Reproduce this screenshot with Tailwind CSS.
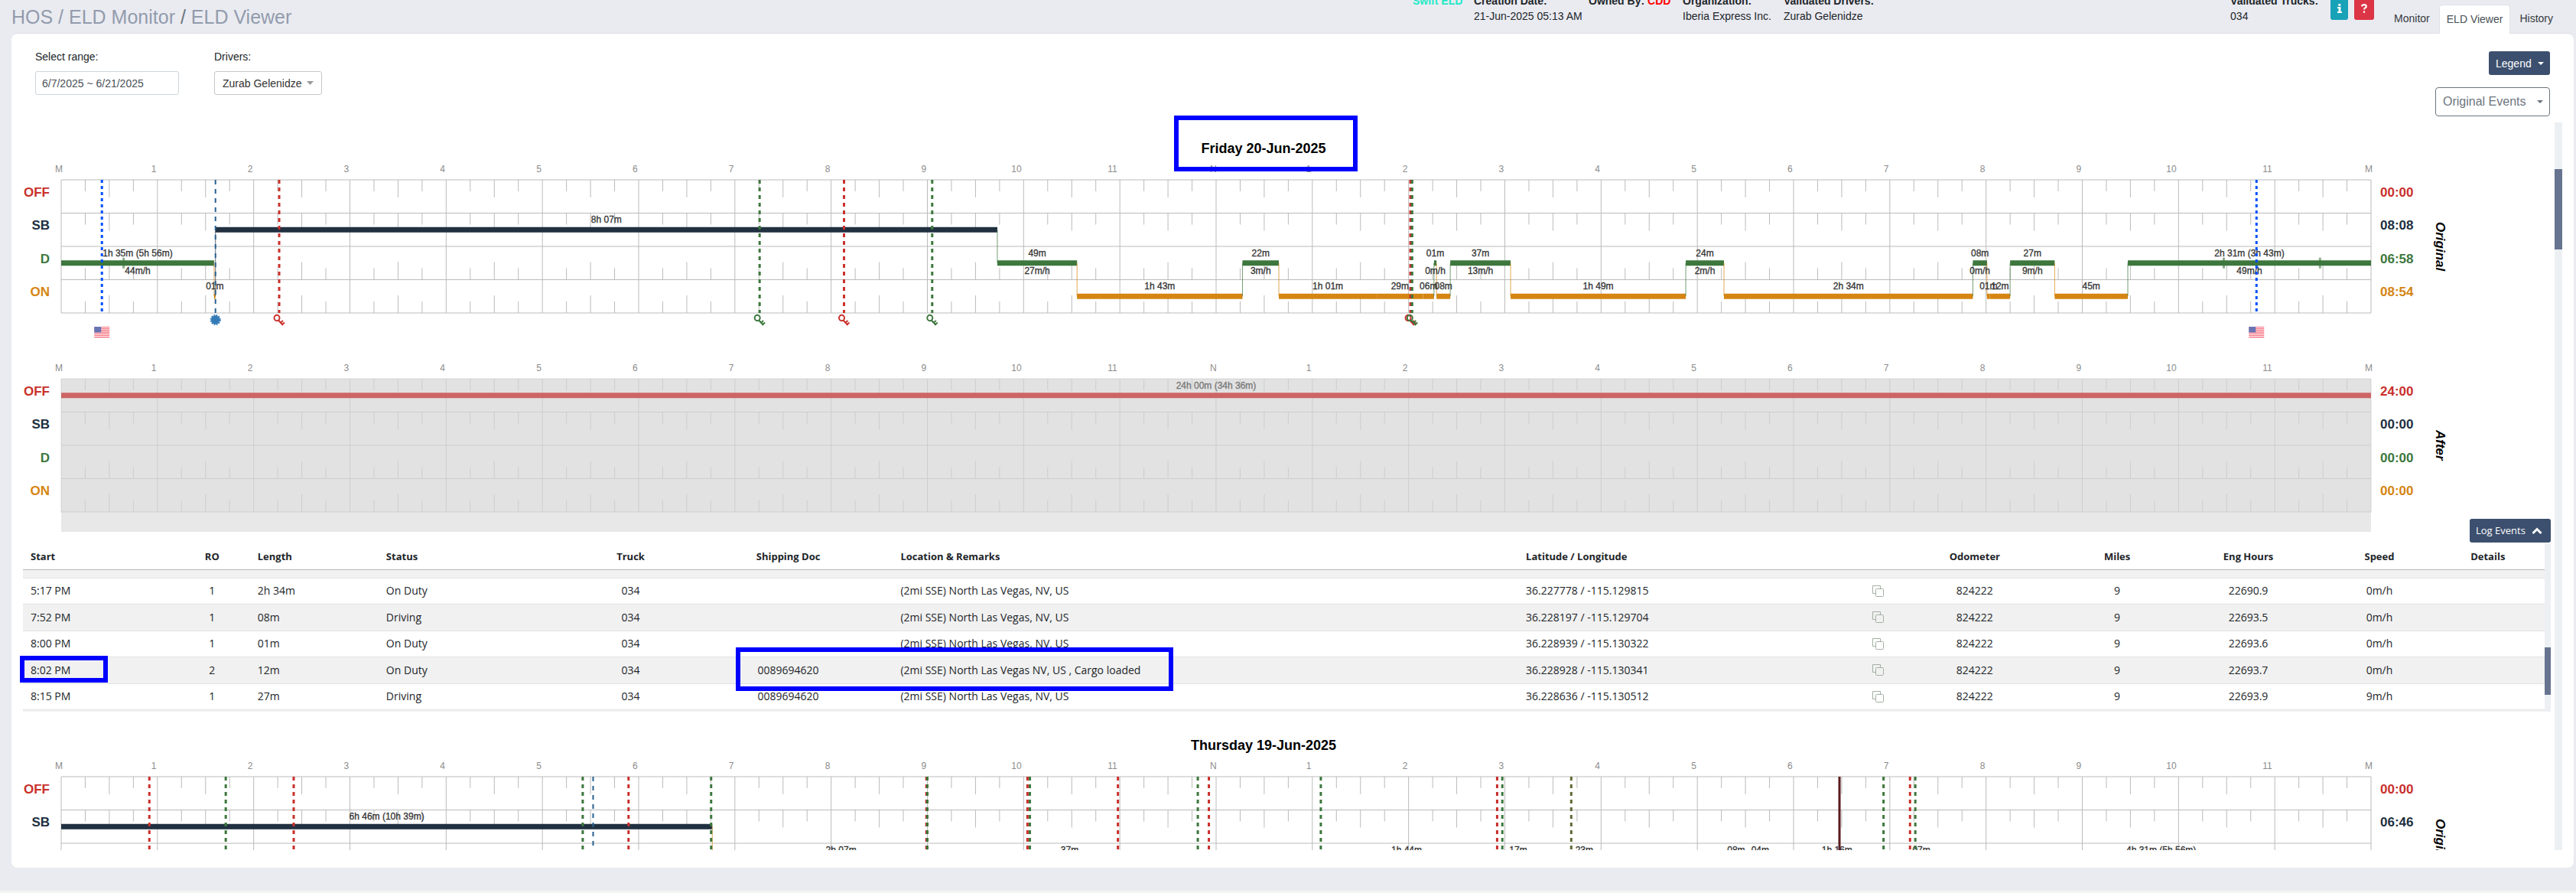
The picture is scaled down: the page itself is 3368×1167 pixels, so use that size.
<!DOCTYPE html>
<html lang="en">
<head>
  <meta charset="UTF-8" />
  <meta name="viewport" content="width=device-width, initial-scale=1.0" />
  <title>HOS / ELD Monitor / ELD Viewer</title>
  <script src="https://cdn.jsdelivr.net/npm/@tailwindcss/browser@4"></script>
</head>
<body class="h-screen flex flex-col overflow-hidden bg-[#eaebf1] text-sm text-[#212529] font-['Liberation_Sans',Arial,sans-serif]">

  <header class="flex items-start h-[43px] shrink-0 pl-[15px] pr-[18px] whitespace-nowrap">
    <h1 class="w-[1832px] shrink text-[25px] leading-[44px] text-[#929bac]">HOS / ELD Monitor <span class="text-[#6c757d]">/</span> ELD Viewer</h1>
    <dl class="flex -mt-[9px] leading-5 flex-1">
      <div class="w-20"><dt class="font-bold text-[#1de9c6]">Swift ELD</dt></div>
      <div class="w-[150px]"><dt class="font-bold">Creation Date:</dt><dd>21-Jun-2025 05:13 AM</dd></div>
      <div class="w-[123px]"><dt class="font-bold">Owned By: <span class="text-[#ff0000]">CDD</span></dt></div>
      <div class="w-[132px]"><dt class="font-bold">Organization:</dt><dd>Iberia Express Inc.</dd></div>
      <div class="flex-1"><dt class="font-bold">Validated Drivers:</dt><dd>Zurab Gelenidze</dd></div>
      <div class="w-[131px]"><dt class="font-bold">Validated Trucks:</dt><dd>034</dd></div>
    </dl>
    <div class="flex gap-2 -mt-[5px]">
      <button aria-label="Info" class="w-[23px] h-[31px] grid place-items-center rounded-[3px] bg-[#17a2b8]">
        <svg class="w-2 h-3" viewBox="0 0 8 12" fill="#fff"><path d="M2.3 0h3v2.8h-3zM1 4h4.4v6H7v2H1v-2h1.5V6H1z"/></svg>
      </button>
      <button aria-label="Help" class="w-[26px] h-[31px] grid place-items-center rounded-[3px] bg-[#dc3545]">
        <svg class="w-2 h-3" viewBox="0 0 8 12" fill="none" stroke="#fff" stroke-width="2.2"><path d="M1 3.4C1.4.4 6.8.4 6.8 3.4 6.8 5.4 4 5 4 7.6"/><path d="M4 9.4v2.4"/></svg>
      </button>
    </div>
    <nav class="flex ml-[14px] mt-[6px] h-[38px] leading-[37px] relative">
      <a href="#" class="px-3 text-[#343a40]">Monitor</a>
      <a href="#" class="px-[9px] bg-white border border-b-0 border-[#dee2e6] rounded-t text-[#495057]">ELD Viewer</a>
      <a href="#" class="px-3 text-[#343a40]">History</a>
    </nav>
  </header>

  <main class="flex-1 min-h-0 flex flex-col ml-[15px] mr-[3px] pb-[23px] mb-[30px] bg-white border-t border-[#dedfe6] rounded-lg">
    <div class="flex h-[106px] shrink-0 pl-[31px] pr-[31px]">
      <div class="w-[234px] pt-5">
        <label for="range" class="block leading-5">Select range:</label>
        <input id="range" value="6/7/2025 ~ 6/21/2025" class="mt-[9px] w-[188px] h-[31px] px-2 border border-[#ced4da] rounded-[3px] text-[#495057]" />
      </div>
      <div class="pt-5 relative">
        <label for="driver" class="block leading-5">Drivers:</label>
        <select id="driver" class="mt-[9px] w-[141px] h-[31px] pl-[10px] border border-[#c4c8cc] rounded-[3px] appearance-none bg-white text-[#333]">
          <option>Zurab Gelenidze</option>
        </select>
        <svg class="absolute right-[11px] top-[62px] w-[9px] h-[5px] pointer-events-none" viewBox="0 0 9 5"><path d="M0 0h9L4.500 5z" fill="#999"/></svg>
      </div>
      <div class="ml-auto pt-[23px] flex flex-col items-end">
        <button class="h-[31px] w-20 shrink-0 pl-[9px] flex items-center gap-2 rounded-[3px] bg-[#3c4f6e] text-white">Legend
          <svg class="w-2 h-1" viewBox="0 0 8 4"><path d="M0 0h8L4 4z" fill="#fff"/></svg>
        </button>
        <button class="mt-4 h-[38px] w-[150px] shrink-0 pl-[9px] flex items-center gap-[14px] rounded-[4px] border border-[#6c757d] bg-white text-base text-[#6c757d]">Original Events
          <svg class="w-2 h-1" viewBox="0 0 8 4"><path d="M0 0h8L4 4z" fill="#6c757d"/></svg>
        </button>
      </div>
    </div>

    <div class="flex-1 min-h-0 flex mr-[15px]">
      <div class="flex-1 min-w-0 overflow-hidden">
        <section class="h-[790px] pt-[32px] relative">
          <div class="pr-[51px] text-center">
            <h2 class="inline-block relative text-lg leading-6 font-bold text-black">Friday 20-Jun-2025
              <span class="absolute z-10 -left-[35px] -right-[41px] -top-[31px] h-[73px] border-[6px] border-[#0000ff]"></span>
            </h2>
          </div>
          <div id="fri-original"></div>
          <div id="fri-after" class="pt-7"></div>
          <button class="absolute right-[5px] top-[528px] w-[106px] h-[31px] pl-2 flex items-center gap-2 rounded-[3px] bg-[#3c4f6e] text-white text-[13px] font-['Open_Sans',sans-serif]">Log Events
            <svg class="w-[14px] h-[10px]" viewBox="0 0 14 10" fill="none" stroke="#fff" stroke-width="3"><path d="M1.500 8L7 2.500 12.500 8"/></svg>
          </button>

          <div class="relative mt-4">
            <div class="flex ml-[15px] mr-[5px] h-[219px] font-['Open_Sans','Noto_Sans',sans-serif]">
              <div class="flex-1 overflow-hidden">
                <table class="w-full table-fixed border-collapse text-left">
                  <colgroup>
                    <col class="w-[6%]" /><col class="w-[3%]" /><col class="w-[5.1%]" /><col class="w-[7.9%]" /><col class="w-[4.2%]" /><col class="w-[8.3%]" /><col class="w-[24.8%]" /><col class="w-[14.5%]" /><col class="w-[7.2%]" /><col class="w-[4.1%]" /><col class="w-[6.3%]" /><col class="w-[4.1%]" /><col class="w-[4.5%]" />
                  </colgroup>
                  <thead>
                    <tr class="h-[33px] border-b border-[#b8b8b8] text-[13px]">
                      <th class="px-[10px]">Start</th><th class="text-center">RO</th><th class="px-[10px]">Length</th><th class="px-[10px]">Status</th><th class="text-center">Truck</th><th class="text-center">Shipping Doc</th><th class="px-[10px]">Location &amp; Remarks</th><th class="px-[10px]">Latitude / Longitude</th><th class="text-center">Odometer</th><th class="text-center">Miles</th><th class="text-center">Eng Hours</th><th class="text-center">Speed</th><th class="text-center">Details</th>
                    </tr>
                  </thead>
                  <tbody id="events"></tbody>
                </table>
              </div>
              <div class="w-2 bg-[#edf0f3] pt-[135px]"><div class="h-[62px] bg-[#66748f]"></div></div>
            </div>
            <span class="absolute left-[11px] top-[146px] w-[115px] h-[35px] border-[6px] border-[#0000ff]"></span>
            <span class="absolute left-[28.48%] top-[135px] w-[572px] h-[57px] border-[6px] border-[#0000ff]"></span>
          </div>
        </section>

        <section>
          <div class="pt-[22px] pr-[51px] text-center">
            <h2 class="inline-block text-lg leading-6 font-bold text-black">Thursday 19-Jun-2025</h2>
          </div>
          <div id="thu-original"></div>
        </section>
      </div>
      <!-- page scrollbar -->
      <div class="w-[10px] mt-[10px] bg-[#edf0f3] pt-[61px]"><div class="h-[105px] bg-[#66748f]"></div></div>
    </div>
  </main>

  <footer class="h-[3px] shrink-0 bg-[#f4f4f4]"></footer>

  <script>
    const RED = '#c9302c', NAVY = '#203040', GREEN = '#3d773d', ORANGE = '#d58512', BLUE = '#0050ff', TEAL = '#286090';
    const ROWS = [['OFF', RED], ['SB', NAVY], ['D', GREEN], ['ON', ORANGE]];
    const ROW_H = 43.5;
    const pct = h => (h / 24 * 100).toFixed(4) + '%';
    const mid = r => ROW_H * (r + 0.5);

    function line(h, y1, y2, color, extra = '') {
      return `<line x1="${pct(h)}" x2="${pct(h)}" y1="${y1}" y2="${y2}" stroke="${color}" ${extra}/>`;
    }

    function label(h, y, text, color = '#333') {
      return `<text x="${pct(h)}" y="${y}" text-anchor="middle" fill="${color}" stroke="${color}" stroke-width="0.3" class="text-xs">${text}</text>`;
    }

    function grid() {
      let out = '';
      for (let q = 0; q <= 96; q++) {
        const h = q / 4;
        if (q % 4 === 0) { out += line(h, 0, 174, '#bbb'); continue; }
        const len = q % 2 === 0 ? 23 : 15;
        for (let r = 0; r < 4; r++) {
          const top = r * ROW_H;
          out += r < 2 ? line(h, top, top + len, '#bbb') : line(h, top + ROW_H - len, top + ROW_H, '#bbb');
        }
      }
      for (let r = 0; r <= 4; r++) {
        out += `<line x1="0" x2="100%" y1="${r * ROW_H}" y2="${r * ROW_H}" stroke="#bbb"/>`;
      }
      return out;
    }

    function hours() {
      let out = '';
      for (let h = 0; h <= 24; h++) {
        const name = h % 24 === 0 ? 'M' : h === 12 ? 'N' : String(h % 12);
        out += `<text x="${pct(h)}" dx="${name.length > 1 ? -16 : -8}" y="-10" fill="#8c8c8c" class="text-xs">${name}</text>`;
      }
      return out;
    }

    // segment: [start, end, row, label, speed]
    function segments(list, color) {
      let out = '', prev = null, texts = '';
      for (const [a, b, r, text, speed] of list) {
        const c = color || ROWS[r][1];
        if (prev !== null && prev !== r) out += line(a, mid(prev), mid(r), c, 'opacity="0.7"');
        out += `<line x1="${pct(a)}" x2="${pct(b)}" y1="${mid(r)}" y2="${mid(r)}" stroke="${c}" stroke-width="7"/>`;
        if (text) texts += label((a + b) / 2, mid(r) - 9, text, color ? '#777' : '#333');
        if (speed) texts += label((a + b) / 2, mid(r) + 14, speed);
        prev = r;
      }
      return out + texts;
    }

    const icons = {
      key: c => `<g stroke="${c}" fill="none" stroke-width="2"><ellipse cx="-3" cy="6.500" rx="3.500" ry="3.800"/><path d="M-1 9.500L5 16M2 12.500l3-2.500M4 15l3-2.500"/></g>`,
      sun: () => `<circle cy="9" r="5.500" fill="#337ab7"/><circle cy="9" r="6" fill="none" stroke="#337ab7" stroke-width="2" stroke-dasharray="2 1.140"/>`,
      flag: () => `<g opacity="0.65"><rect x="-10" y="18" width="20" height="14" fill="#fff"/><path d="M-10 18.500h20M-10 20.700h20M-10 22.900h20M-10 25.100h20M-10 27.300h20M-10 29.500h20M-10 31.600h20" stroke="#f0142d" stroke-width="1.200"/><rect x="-10" y="18" width="9" height="7.500" fill="#1c2a8c"/></g>`
    };

    // marker: [hour, kind, color]
    function markers(list) {
      const dash = { key: '5 5', sun: '6 6', flag: '4 4', solid: 'none' };
      return list.map(([h, kind, c]) => {
        const w = kind === 'sun' ? 2 : 3;
        const icon = icons[kind] ? `<svg x="${pct(h)}" y="174" width="1" height="1" overflow="visible">${icons[kind](c)}</svg>` : '';
        return line(h, 0, 174, c, `stroke-width="${w}" stroke-dasharray="${dash[kind]}"`) + icon;
      }).join('');
    }

    function chart(id, name, totals, body, after) {
      document.getElementById(id).innerHTML = `
        <div class="flex pt-[29px]">
          <div class="w-[65px] pr-[15px] pt-[5px] text-right text-[17px] font-bold">
            ${ROWS.map(([n, c], i) => `<div class="leading-6 ${i === 1 ? 'mt-[19px] mb-[20px]' : i === 3 ? 'mt-[19px]' : ''}" style="color:${c}">${n}</div>`).join('')}
          </div>
          <div class="flex-1 min-w-0 ${after ? 'bg-[#e8e8e8] h-[200px]' : 'h-[203px]'}">
            <svg class="block w-full h-[174px] overflow-visible">
              ${after ? '<rect width="100%" height="174" fill="#e2e2e2"/><g opacity="0.5">' + grid() + '</g>' : grid()}
              ${hours()}${body}
            </svg>
          </div>
          <div class="w-[240px] flex">
            <div class="w-[78px] pl-[12px] pt-[5px] text-[17px] font-bold">
              ${totals.map((t, i) => `<div class="leading-6 ${i === 1 ? 'mt-[19px] mb-[20px]' : i === 3 ? 'mt-[19px]' : ''}" style="color:${ROWS[i][1]}">${t}</div>`).join('')}
            </div>
            <div class="h-[174px] leading-6 [writing-mode:vertical-rl] text-center text-[17px] font-bold italic text-black">${name}</div>
          </div>
        </div>`;
    }

    const tick = h => line(h, mid(2) - 7, mid(2) + 7, GREEN, 'stroke-width="3" opacity="0.6"');

    chart('fri-original', 'Original', ['00:00', '08:08', '06:58', '08:54'],
      segments([
        [0, 1.589, 2, '1h 35m (5h 56m)', '44m/h'],
        [1.589, 1.603, 3, '01m'],
        [1.603, 9.727, 1, '8h 07m'],
        [9.727, 10.555, 2, '49m', '27m/h'],
        [10.555, 12.274, 3, '1h 43m'],
        [12.274, 12.652, 2, '22m', '3m/h'],
        [12.652, 13.67, 3, '1h 01m'],
        [13.67, 14.15, 3, '29m'],
        [14.15, 14.264, 3, '06m'],
        [14.264, 14.29, 2, '01m', '0m/h'],
        [14.29, 14.433, 3, '08m'],
        [14.433, 15.06, 2, '37m', '13m/h'],
        [15.06, 16.88, 3, '1h 49m'],
        [16.88, 17.277, 2, '24m', '2m/h'],
        [17.277, 19.863, 3, '2h 34m'],
        [19.863, 20.01, 2, '08m', '0m/h'],
        [20.01, 20.04, 3, '01m'],
        [20.04, 20.25, 3, '12m'],
        [20.25, 20.713, 2, '27m', '9m/h'],
        [20.713, 21.473, 3, '45m'],
        [21.473, 24, 2, '2h 31m (3h 43m)', '49m/h']
      ]) + tick(0.649) + tick(22.47) + tick(23.47) +
      markers([
        [0.423, 'flag', BLUE], [1.603, 'sun', TEAL], [2.265, 'key', RED], [7.257, 'key', GREEN], [8.134, 'key', RED],
        [9.05, 'key', GREEN], [14.019, 'key', RED], [14.037, 'key', GREEN], [22.81, 'flag', BLUE]
      ]));

    chart('fri-after', 'After', ['24:00', '00:00', '00:00', '00:00'],
      segments([[0, 24, 0, '24h 00m (34h 36m)']], '#cd6565'), true);

    chart('thu-original', 'Original', ['00:00', '06:46', '07:52', '09:22'],
      segments([[0, 6.765, 1, '6h 46m (10h 39m)'], [6.765, 7.05, 3, '']]) +
      [[8.103, '2h 07m'], [10.478, '37m'], [13.979, '1h 44m'], [15.139, '17m'], [15.825, '23m'], [17.403, '08m'],
       [17.653, '04m'], [18.451, '1h 16m'], [19.328, '07m'], [21.82, '4h 31m (5h 56m)']]
        .map(([h, t]) => label(h, mid(2) - 9, t)).join('') +
      markers([
        [0.916, 'key', RED], [1.71, 'key', GREEN], [2.416, 'key', RED], [5.419, 'key', GREEN], [5.527, 'sun', TEAL],
        [5.895, 'key', RED], [6.753, 'key', GREEN], [8.99, 'key', RED], [9, 'key', GREEN], [10.04, 'key', RED],
        [10.065, 'key', GREEN], [10.98, 'key', RED], [11.81, 'key', GREEN], [11.925, 'key', RED], [13.088, 'key', GREEN],
        [14.92, 'key', RED], [14.974, 'key', GREEN], [15.69, 'key', '#5e6a35'], [18.477, 'solid', '#5a1a1a'],
        [18.935, 'key', GREEN], [19.21, 'key', RED], [19.265, 'key', GREEN]
      ]));

    const place = '(2mi SSE) North Las Vegas, NV, US';
    const events = [
      ['5:17 PM', 1, '2h 34m', 'On Duty', '', place, '36.227778 / -115.129815', '22690.9', '0m/h'],
      ['7:52 PM', 1, '08m', 'Driving', '', place, '36.228197 / -115.129704', '22693.5', '0m/h'],
      ['8:00 PM', 1, '01m', 'On Duty', '', place, '36.228939 / -115.130322', '22693.6', '0m/h'],
      ['8:02 PM', 2, '12m', 'On Duty', '0089694620', '(2mi SSE) North Las Vegas NV, US , Cargo loaded', '36.228928 / -115.130341', '22693.7', '0m/h'],
      ['8:15 PM', 1, '27m', 'Driving', '0089694620', place, '36.228636 / -115.130512', '22693.9', '9m/h']
    ];
    const copyIcon = `<svg class="w-[15px] h-[15px]" viewBox="0 0 15 15" fill="none" stroke="#a3b0a3"><path d="M4 10.500H.500V.500h10V4"/><rect x="4.500" y="4.500" width="10" height="10" rx="1"/></svg>`;
    const spacer = '<tr class="h-[11px] bg-[#f1f1f1] border-b border-[#dee2e6]"><td colspan="13"></td></tr>';
    document.getElementById('events').innerHTML = spacer + events.map((e, i) => `
      <tr class="${i % 2 ? 'h-[35px] bg-[#f1f1f1]' : 'h-[34px]'} border-b border-[#dee2e6]">
        <td class="px-[10px]">${e[0]}</td><td class="text-center">${e[1]}</td><td class="px-[10px]">${e[2]}</td>
        <td class="px-[10px]">${e[3]}</td><td class="text-center">034</td><td class="text-center">${e[4]}</td>
        <td class="px-[10px]">${e[5]}</td>
        <td class="pl-[10px]"><div class="flex items-center justify-between">${e[6]}<button aria-label="Copy">${copyIcon}</button></div></td>
        <td class="text-center">824222</td><td class="text-center">9</td><td class="text-center">${e[7]}</td>
        <td class="text-center">${e[8]}</td><td></td>
      </tr>`).join('') + spacer;
  </script>
</body>
</html>
